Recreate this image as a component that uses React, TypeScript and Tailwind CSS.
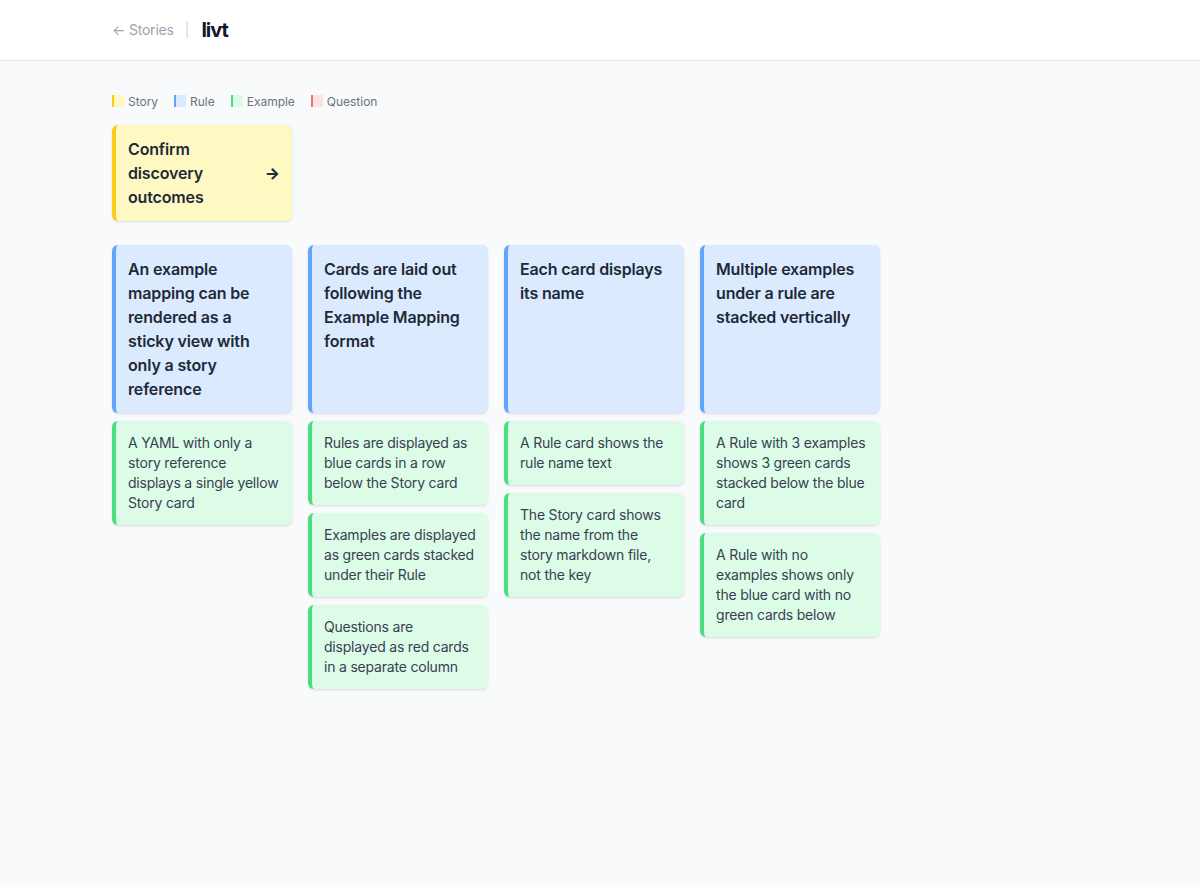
const font = { fontFamily: "Inter, 'Noto Sans', sans-serif" };

const legend = [
  { label: "Story", cls: "bg-[#fef9c3] border-[#facc15]" },
  { label: "Rule", cls: "bg-[#dbeafe] border-[#60a5fa]" },
  { label: "Example", cls: "bg-[#dcfce7] border-[#4ade80]" },
  { label: "Question", cls: "bg-[#fee2e2] border-[#f87171]" },
];

const columns = [
  {
    rule: "An example mapping can be rendered as a sticky view with only a story reference",
    examples: ["A YAML with only a story reference displays a single yellow Story card"],
  },
  {
    rule: "Cards are laid out following the Example Mapping format",
    examples: [
      "Rules are displayed as blue cards in a row below the Story card",
      "Examples are displayed as green cards stacked under their Rule",
      "Questions are displayed as red cards in a separate column",
    ],
  },
  {
    rule: "Each card displays its name",
    examples: [
      "A Rule card shows the rule name text",
      "The Story card shows the name from the story markdown file, not the key",
    ],
  },
  {
    rule: "Multiple examples under a rule are stacked vertically",
    examples: [
      "A Rule with 3 examples shows 3 green cards stacked below the blue card",
      "A Rule with no examples shows only the blue card with no green cards below",
    ],
  },
];

export default function App() {
  return (
    <div className="min-h-[885px] bg-[#f9fafb]" style={font}>
      <header className="flex h-[61px] items-center border-b border-[#e5e7eb] bg-white pl-28">
        <a className="text-sm tracking-[-0.2px] text-[#9ca3af]">← Stories</a>
        <span className="ml-[11px] mr-3 text-sm text-[#d1d5db]">|</span>
        <h1 className="text-xl font-bold tracking-[-1px] text-[#111827]">livt</h1>
      </header>
      <main className="pl-28 pt-8">
        <div className="mb-4 flex h-4 items-center gap-4 text-xs tracking-[-0.02px] text-[#6b7280]">
          {legend.map((l) => (
            <div key={l.label} className="flex items-center gap-1">
              <span className={`h-3 w-3 border-l-2 ${l.cls}`} />
              <span className="pt-0.5">{l.label}</span>
            </div>
          ))}
        </div>
        <div className="mb-6 flex w-[180px] items-center rounded-md border-l-4 border-[#facc15] bg-[#fef9c3] p-3 shadow-sm">
          <div className="flex-1 text-base font-semibold leading-6 tracking-[-0.15px] text-[#1f2937]">
            Confirm
            <br />
            discovery
            <br />
            outcomes
          </div>
          <span className="text-base font-extrabold text-[#1f2937]">→</span>
        </div>
        <div className="grid w-max grid-cols-[repeat(4,180px)] gap-x-4 gap-y-2">
          {columns.map((c) => (
            <div
              key={c.rule}
              className="rounded-md border-l-4 border-[#60a5fa] bg-[#dbeafe] p-3 text-base font-semibold leading-6 tracking-[-0.15px] text-[#1f2937] shadow-sm"
            >
              {c.rule}
            </div>
          ))}
          {columns.map((c) => (
            <div key={c.rule} className="flex flex-col gap-2">
              {c.examples.map((e) => (
                <div
                  key={e}
                  className="rounded-md border-l-4 border-[#4ade80] bg-[#dcfce7] p-3 text-sm leading-5 tracking-[-0.2px] text-[#374151] shadow-sm"
                >
                  {e}
                </div>
              ))}
            </div>
          ))}
        </div>
      </main>
    </div>
  );
}
